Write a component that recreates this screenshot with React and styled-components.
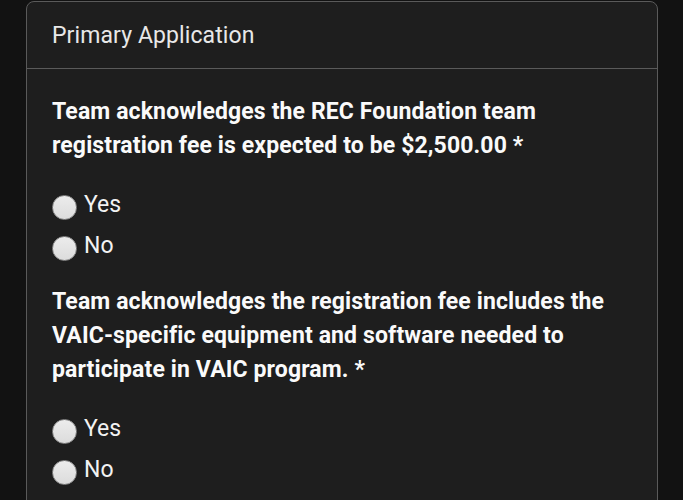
import React, { useState } from 'react'
import styled, { createGlobalStyle } from 'styled-components'

const GlobalStyle = createGlobalStyle`
  html, body {
    margin: 0;
    background: #121212;
    font-family: Roboto, "Liberation Sans", sans-serif;
  }
`

const Page = styled.div`
  padding: 1px 25px 0 26px;
  height: 500px;
  box-sizing: border-box;
  overflow: hidden;
`

const Card = styled.div`
  background: #1e1e1e;
  border: 1px solid #5a5a5a;
  border-radius: 8px;
`

const Header = styled.div`
  height: 66px;
  display: flex;
  align-items: center;
  padding: 0 25px;
  border-bottom: 1px solid #5a5a5a;
  color: #e8e8e8;
  font-size: 23px;
  font-weight: 400;
  letter-spacing: 0.1px;
`

const Body = styled.div`
  padding: 24px 25px 0;
`

const Question = styled.div`
  color: #fafafa;
  font-size: 23px;
  font-weight: 700;
  line-height: 34px;
  letter-spacing: 0.12px;
  padding-top: 2px;
  margin-bottom: 21px;
`

const Group = styled.div`
  margin-bottom: 17px;
`

const Option = styled.label`
  display: flex;
  align-items: center;
  height: 41px;
  gap: 7px;
  color: #f2f2f2;
  font-size: 23px;
  cursor: pointer;
`

const Circle = styled.span`
  width: 25px;
  height: 25px;
  margin-top: 5px;
  border-radius: 50%;
  box-sizing: border-box;
  border: 1px solid #8a8a8a;
  background: ${(p) => (p.checked ? 'radial-gradient(circle, #333 30%, #e6e6e6 34%)' : 'linear-gradient(#ececec, #dcdcdc)')};
`

const questions = [
  'Team acknowledges the REC Foundation team registration fee is expected to be $2,500.00 *',
  'Team acknowledges the registration fee includes the VAIC-specific equipment and software needed to participate in VAIC program. *'
]

const RadioGroup = ({ text }) => {
  const [value, setValue] = useState('')
  return (
    <Group>
      <Question>{text}</Question>
      {['Yes', 'No'].map((opt) => (
        <Option key={opt} onClick={() => setValue(opt)}>
          <Circle checked={value === opt} />
          {opt}
        </Option>
      ))}
    </Group>
  )
}

const App = () => {
  return (
    <Page>
      <GlobalStyle />
      <Card>
        <Header>Primary Application</Header>
        <Body>
          {questions.map((q) => (
            <RadioGroup key={q} text={q} />
          ))}
        </Body>
      </Card>
    </Page>
  )
}

export default App
